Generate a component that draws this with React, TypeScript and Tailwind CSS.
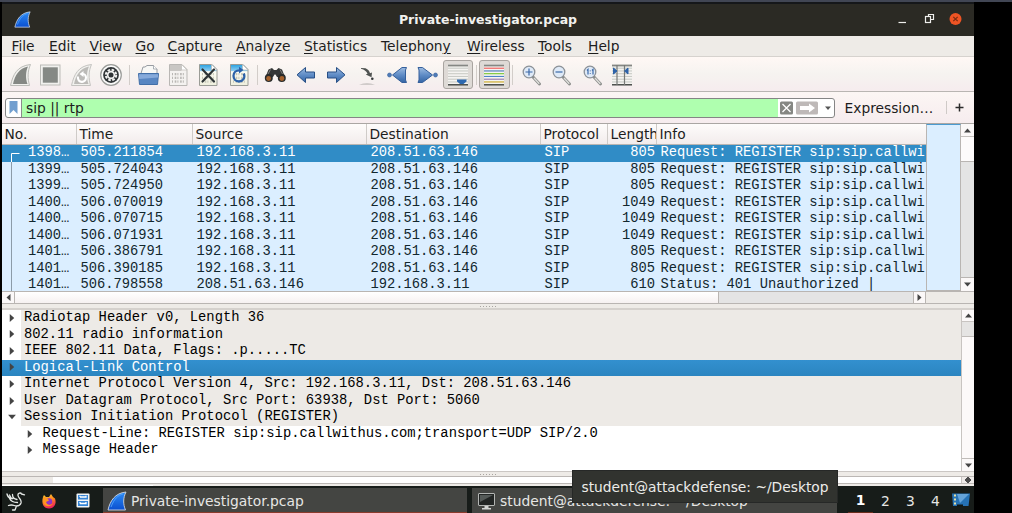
import React from "react";

type Kids = { children?: React.ReactNode };

const Icon = ({ children }: Kids) => (
  <div className="flex h-[30px] w-[30.42px] shrink-0 items-center justify-center">
    <svg width="30" height="30" viewBox="0 0 30 30" fill="none">{children}</svg>
  </div>
);

const Pressed = ({ children }: Kids) => (
  <div className="flex h-[29px] w-[30.42px] shrink-0 items-center justify-center rounded-[3px] border border-[#a9a4a0] bg-[#dedad6]">
    <svg width="28" height="28" viewBox="1 1 28 28" fill="none" className="shrink-0">{children}</svg>
  </div>
);

const Sep = () => (
  <div className="flex h-[20px] w-[6.2px] shrink-0 justify-center">
    <div className="w-px bg-[#d2cdc9]" />
  </div>
);

const Defs = () => (
  <svg width="0" height="0" className="absolute">
    <defs>
      <linearGradient id="arrow" x1="0" y1="0" x2="0" y2="1">
        <stop offset="0" stopColor="#9dbbe0" />
        <stop offset="0.5" stopColor="#5f8cc6" />
        <stop offset="1" stopColor="#3465a4" />
      </linearGradient>
      <linearGradient id="fin" x1="0" y1="0" x2="0" y2="1">
        <stop offset="0" stopColor="#2d8cf5" />
        <stop offset="1" stopColor="#0a4fd0" />
      </linearGradient>
      <linearGradient id="sheet" x1="0" y1="0" x2="0" y2="1">
        <stop offset="0" stopColor="#26a0e0" />
        <stop offset="0.3" stopColor="#8fcdf0" />
        <stop offset="0.34" stopColor="#fdfdf4" />
        <stop offset="1" stopColor="#eeeedd" />
      </linearGradient>
      <linearGradient id="fire" x1="0" y1="0" x2="0.3" y2="1">
        <stop offset="0" stopColor="#ffd83a" />
        <stop offset="0.5" stopColor="#ff8a1e" />
        <stop offset="1" stopColor="#f0245a" />
      </linearGradient>
    </defs>
  </svg>
);

const Fin = ({ size }: { size: number }) => (
  <svg width={size} height={size} viewBox="0 0 20 20" className="shrink-0">
    <path d="M1 19C3 10 8 2 19 1C16 7 16 13 18.500 19Z" fill="url(#fin)" stroke="#d2d8df" strokeWidth="0.9" />
    <path d="M4 16C7 8 11 4 16 3" stroke="#58aaff" strokeWidth="0.8" fill="none" />
  </svg>
);

const Bits = ({ color }: { color: string }) => (
  <g fill={color}>
    {[13, 16.7, 20.4].map((y) =>
      [9, 11.7, 14.4, 17.1, 19.8].map((x, i) => (
        <rect key={`${x}-${y}`} x={x} y={y} width={i % 2 ? 1.6 : 1} height="2.3" />
      ))
    )}
  </g>
);

const Sheet = ({ active }: { active?: boolean }) => (
  <>
    <path
      d="M6.500 4.500H19L24 9.500V25.500H6.500Z"
      fill={active ? "url(#sheet)" : "#f4f2f0"}
      stroke={active ? "#9a9c96" : "#b9b7b4"}
    />
    {!active && <path d="M7 5H18.500V11H7Z" fill="#c9c7c4" />}
    <path d="M18.500 4.500V10H24Z" fill="#fff" stroke="#bbb9b4" strokeWidth="0.7" />
    <Bits color={active ? "#c4c5b6" : "#b9b7b4"} />
  </>
);

const Lens = ({ children }: Kids) => (
  <>
    <path d="M17 17L23.500 24" stroke="#8c8e8c" strokeWidth="3" strokeLinecap="round" />
    <path d="M18 18L23.300 23.700" stroke="#e0e0dd" strokeWidth="1.300" />
    <circle cx="13" cy="12" r="5.800" fill="#dfeaf7" stroke="#8c9298" strokeWidth="1.300" />
    <g stroke="#3a68a8" strokeWidth="1.200">{children}</g>
  </>
);

const Lines = ({ colors }: { colors: string[] }) => (
  <g>
    <rect x="5" y="4.500" width="20" height="20.500" fill="#f5f4f1" />
    <path d="M5 5.500H25" stroke="#858783" strokeWidth="1.800" />
    {colors.map((c, i) => (
      <path key={i} d="M5 0H25" transform={`translate(0 ${8.2 + i * 2.75})`} stroke={c} strokeWidth="1.100" />
    ))}
    <path d="M5 24.800H25" stroke="#303432" strokeWidth="1.300" />
  </g>
);

const gray = ["#c9cbc6", "#c9cbc6", "#c9cbc6", "#c9cbc6", "#c9cbc6", "#c9cbc6"];

const Toolbar = () => (
  <div className="flex h-[36px] shrink-0 items-center border-t border-b border-t-[#d6d2ce] border-b-[#b9b5b2] bg-linear-to-b from-[#fff8f5] via-[#f6f3f0] to-[#f6ecee] pt-[1.5px] pl-[2.6px]">
    <Icon>
      <path d="M5.500 25.500C8 14.500 12 6 25.500 4.500C22.500 11 22.500 18.500 24.500 25.500Z" fill="#f1f1ee" stroke="#bcbcb8" />
      <path d="M8 24C10 15 14 8.500 23 6.500C20.500 12 20.500 18.500 22.500 24Z" fill="#858884" />
    </Icon>
    <Icon>
      <rect x="5.500" y="5" width="19.500" height="20" fill="#f1f1ee" stroke="#bcbcb8" />
      <rect x="7.800" y="7.300" width="15" height="15.400" fill="#858985" />
    </Icon>
    <Icon>
      <path d="M5.500 25.500C8 14.500 12 6 25.500 4.500C22.500 11 22.500 18.500 24.500 25.500Z" fill="#f1f1ee" stroke="#c4c3c0" />
      <path d="M8 24C10 15 14 8.500 23 6.500C20.500 12 20.500 18.500 22.500 24Z" fill="#bcbbb8" />
      <path d="M11.800 16.500C11.800 23.500 20 23.500 20 17.500C20 15.500 18.500 14 16.500 14" stroke="#fff" strokeWidth="2.100" />
      <path d="M17.500 11V17L13.500 14Z" fill="#fff" />
    </Icon>
    <Icon>
      <circle cx="15" cy="15" r="10.300" fill="#fbfbfa" stroke="#9a9c99" strokeWidth="1.200" />
      <circle cx="15" cy="15" r="7.900" fill="#2f3436" />
      <circle cx="15" cy="15" r="5.200" stroke="#f1f1f0" strokeWidth="2" strokeDasharray="2.600 1.480" />
      <circle cx="15" cy="15" r="4.200" fill="#f1f1f0" />
      <circle cx="15" cy="15" r="2.500" fill="#2f3436" />
    </Icon>
    <Sep />
    <Icon>
      <path d="M7.500 15L10 7H12L14 5.500H20.500L24 9V15Z" fill="#f8f8f6" stroke="#8c9299" strokeWidth="0.900" />
      <path d="M20.500 5.500V9H24" fill="#fff" stroke="#8c9299" strokeWidth="0.700" />
      <path d="M5.500 13.500H25.500L24.500 24.500H6.500Z" fill="#5886c2" stroke="#426fa8" />
      <path d="M6 14.300H25V17.500L6.300 19Z" fill="#86aadb" />
    </Icon>
    <Icon><Sheet /></Icon>
    <Icon>
      <Sheet active />
      <path d="M9.500 9.500L21 21.500M21 9.500L9.500 21.500" stroke="#2e3436" strokeWidth="2.200" strokeLinecap="round" />
    </Icon>
    <Icon>
      <Sheet active />
      <path d="M19.800 13.500C21.500 18 18.800 21.500 15 21.500C11.400 21.500 9.500 18.800 9.500 15.800C9.500 12.500 12 10.300 15.500 10.300" stroke="#2d62a8" strokeWidth="2.300" />
      <path d="M15 6.800V13.500L19.500 10Z" fill="#2d62a8" />
    </Icon>
    <Sep />
    <Icon>
      <path d="M8.500 9.500L12 8L14 10H16.500L18.500 8L22 9.500L25 17H17L15.500 14.500H14.500L13 17H5.500Z" fill="#343636" />
      <circle cx="8.800" cy="18" r="4" fill="#282b2b" />
      <circle cx="21.800" cy="18" r="4" fill="#282b2b" />
      <circle cx="8.600" cy="18.500" r="2.400" fill="#a6622c" />
      <circle cx="21.900" cy="18.500" r="2.400" fill="#a6622c" />
      <path d="M10.500 9.500L8 14M20 9.500L22.500 14" stroke="#888" strokeWidth="0.900" />
    </Icon>
    <Icon>
      <path d="M6 14.800L14.500 7.500V12H23.500V18H14.500V22.500Z" fill="url(#arrow)" stroke="#274f85" strokeLinejoin="round" />
    </Icon>
    <Icon>
      <path d="M24 14.800L15.500 7.500V12H6.500V18H15.500V22.500Z" fill="url(#arrow)" stroke="#274f85" strokeLinejoin="round" />
    </Icon>
    <Icon>
      <path d="M9 8L13.500 8.200C16 9.200 17.500 11 18 13.200L20 12.500L19.500 17.200L13.800 14.500L15.500 13.800C14.500 11.500 12.500 9.500 9 8.800Z" fill="#4f5351" />
      <circle cx="20.300" cy="18.800" r="1.300" fill="#33383a" />
      <path d="M7 24.500C12 23.200 18 23.200 23 24.500Z" fill="#aaa8a5" />
    </Icon>
    <Icon>
      <circle cx="7.500" cy="15" r="2" fill="#4f7cb8" stroke="#345f9b" strokeWidth="0.600" />
      <path d="M10.500 15L20 7.500H24.500L23.500 10V20L24.500 22.500H20Z" fill="url(#arrow)" stroke="#345f9b" strokeLinejoin="round" />
    </Icon>
    <Icon>
      <circle cx="23.500" cy="15" r="2" fill="#4f7cb8" stroke="#345f9b" strokeWidth="0.600" />
      <path d="M20.500 15L10.500 7.500H6L7 10V20L6 22.500H10.500Z" fill="url(#arrow)" stroke="#345f9b" strokeLinejoin="round" />
    </Icon>
    <Pressed>
      <Lines colors={gray} />
      <path d="M14 19.500H23.500V21.500L20.500 24H17L14 21.500Z" fill="#2d69b0" />
    </Pressed>
    <Sep />
    <Pressed>
      <Lines colors={["#ef5350", "#4777b8", "#73c52a", "#4e83c8", "#9274ab", "#c9a51b"]} />
    </Pressed>
    <Sep />
    <Icon><Lens><path d="M9.500 12H16.500M13 8.500V15.500" /></Lens></Icon>
    <Icon><Lens><path d="M9.500 12H16.500" /></Lens></Icon>
    <Icon><Lens><path d="M10 10.500L11 9.500V14.500M15 10.500L16 9.500V14.500M13.300 10.500V11.300M13.300 13.200V14" /></Lens></Icon>
    <Icon>
      <Lines colors={gray} />
      <path d="M10 5V25M17.500 5V25" stroke="#777a77" strokeWidth="1.200" />
      <path d="M6.500 8L10 11L6.500 14ZM21 8L17.500 11L21 14Z" fill="#2d62a8" stroke="#2d62a8" />
    </Icon>
  </div>
);

const menus: [string, string, string, string][] = [
  ["", "F", "ile", "w-[37.5px]"],
  ["", "E", "dit", "w-[40.5px]"],
  ["", "V", "iew", "w-[46px]"],
  ["", "G", "o", "w-[32px]"],
  ["", "C", "apture", "w-[68.5px]"],
  ["", "A", "nalyze", "w-[68px]"],
  ["", "S", "tatistics", "w-[77px]"],
  ["Telephon", "y", "", "w-[86px]"],
  ["", "W", "ireless", "w-[71px]"],
  ["", "T", "ools", "w-[50px]"],
  ["", "H", "elp", "w-[40px]"],
];

const REG = "Request: REGISTER sip:sip.callwi";
const A = "192.168.3.11";
const B = "208.51.63.146";
const packets = [
  ["1398…", "505.211854", A, B, "805", REG],
  ["1399…", "505.724043", A, B, "805", REG],
  ["1399…", "505.724950", A, B, "805", REG],
  ["1400…", "506.070019", A, B, "1049", REG],
  ["1400…", "506.070715", A, B, "1049", REG],
  ["1400…", "506.071931", A, B, "1049", REG],
  ["1401…", "506.386791", A, B, "805", REG],
  ["1401…", "506.390185", A, B, "805", REG],
  ["1401…", "506.798558", B, A, "610", "Status: 401 Unauthorized |"],
];

const cols: [string, string][] = [
  ["No.", "w-[75px]"],
  ["Time", "w-[116px]"],
  ["Source", "w-[174px]"],
  ["Destination", "w-[174px]"],
  ["Protocol", "w-[67px]"],
  ["Length", "w-[49px]"],
];

const Tri = ({ dir, size = 9 }: { dir: "up" | "down" | "left" | "right"; size?: number }) => {
  const d = {
    up: "M1 6.500H8L4.500 2.500Z",
    down: "M1 2.500H8L4.500 6.500Z",
    left: "M6.500 1V8L2.500 4.500Z",
    right: "M2.500 1V8L6.500 4.500Z",
  }[dir];
  return (
    <svg width={size} height={size} viewBox="0 0 9 9" className="shrink-0"><path d={d} fill="#444" /></svg>
  );
};

const details: [string, "right" | "down", number, boolean][] = [
  ["Radiotap Header v0, Length 36", "right", 0, false],
  ["802.11 radio information", "right", 0, false],
  ["IEEE 802.11 Data, Flags: .p.....TC", "right", 0, false],
  ["Logical-Link Control", "right", 0, true],
  ["Internet Protocol Version 4, Src: 192.168.3.11, Dst: 208.51.63.146", "right", 0, false],
  ["User Datagram Protocol, Src Port: 63938, Dst Port: 5060", "right", 0, false],
  ["Session Initiation Protocol (REGISTER)", "down", 0, false],
  ["Request-Line: REGISTER sip:sip.callwithus.com;transport=UDP SIP/2.0", "right", 1, false],
  ["Message Header", "right", 1, false],
];

const Grip = () => (
  <div className="flex gap-[2px]">
    {[0, 1, 2, 3, 4, 5].map((i) => <div key={i} className="h-px w-px bg-[#a9a5a1]" />)}
  </div>
);

const PacketList = () => (
  <div className="flex h-[168px] shrink-0 border-t border-[#aaa6a3]">
    <div className="flex w-[924px] shrink-0 flex-col overflow-hidden">
      <div className="flex h-[21px] shrink-0 border-b border-[#b9b5b2] bg-linear-to-b from-[#fefcfb] to-[#f2ecec] leading-[20px]">
        {cols.map(([name, w]) => (
          <div key={name} className={`${w} shrink-0 overflow-hidden border-r border-[#cfcbc8] pl-[2.5px]`}>{name}</div>
        ))}
        <div className="pl-[2.5px]">Info</div>
      </div>
      <div className="flex h-[146px] flex-col overflow-hidden bg-[#dbeeff] font-['Liberation_Mono',monospace] text-[13.78px] leading-[16.55px] text-[#12272e]">
        {packets.map((p, i) => (
          <div key={i} className={`flex h-[16.55px] shrink-0 whitespace-pre ${i === 0 ? "bg-[#308cc6] text-white" : ""}`}>
            <div className="flex w-[75px] shrink-0">
              <svg width="26" height="17" viewBox="0 0 26 17" className="shrink-0" fill="none">
                <path d={i === 0 ? "M17.500 8.500H9.500V17" : "M9.500 0V17"} stroke={i === 0 ? "#fff" : "#8c9ba8"} />
              </svg>
              <span>{p[0]}</span>
            </div>
            <div className="w-[116px] shrink-0 pl-[3.5px]">{p[1]}</div>
            <div className="w-[174px] shrink-0 pl-[3.5px]">{p[2]}</div>
            <div className="w-[174px] shrink-0 pl-[3.5px]">{p[3]}</div>
            <div className="w-[67px] shrink-0 pl-[3.5px]">SIP</div>
            <div className="w-[49px] shrink-0 pr-[2px] text-right">{p[4]}</div>
            <div className="pl-[3.5px]">{p[5]}</div>
          </div>
        ))}
      </div>
    </div>
    <div className="h-[167px] w-[35px] shrink-0 border-t border-r border-b border-l border-[#b9b5b2] border-t-[#4b9bd0] bg-[#dbeeff]" />
    <div className="flex w-[13px] shrink-0 flex-col bg-[#e4e4e4]">
      <div className="flex h-[13px] items-center justify-center border-b border-[#c5c1be] bg-[#fbf8f8]"><Tri dir="up" /></div>
      <div className="h-[25px] border-b border-[#b9b5b2] bg-[#fdfbfb]" />
      <div className="grow" />
      <div className="flex h-[14px] items-center justify-center border-t border-[#b9b5b2] bg-[#fbf8f8]"><Tri dir="down" /></div>
    </div>
  </div>
);

const DetailTree = () => (
  <div className="flex h-[164px] shrink-0 border-t-2 border-b border-t-[#d5d1cd] border-b-[#cbc7c4] bg-white">
    <div className="flex w-[959px] shrink-0 flex-col font-['Liberation_Mono',monospace] text-[13.82px] leading-[15px]">
      {details.map(([text, dir, depth, selected], i) => (
        <div
          key={i}
          className={`flex h-[16.55px] shrink-0 items-center whitespace-pre ${selected ? "bg-linear-to-b from-[#3390cf] to-[#2b85c0] text-white" : "text-black"}`}
        >
          <div className={`flex shrink-0 items-center pb-px ${depth ? "w-[37.5px] pl-[23px]" : "w-[19px] pl-[4.5px]"}`}><Tri dir={dir} size={10} /></div>
          <div className={`h-full grow pl-[3px] ${!selected && !depth ? "bg-[#edeae6]" : ""}`}>{text}</div>
        </div>
      ))}
    </div>
    <div className="flex w-[13px] shrink-0 flex-col border-l border-[#c8c4c1] bg-[#fcf9f9]">
      <div className="flex h-[12px] items-center justify-center border-b border-[#c8c4c1]"><Tri dir="up" /></div>
      <div className="h-[15px] border-b border-[#c0bcb9] bg-[#e5e4e3]" />
      <div className="grow" />
      <div className="flex h-[13px] items-center justify-center border-t border-[#c0bcb9]"><Tri dir="down" /></div>
    </div>
  </div>
);

const Taskbar = () => (
  <div className="flex h-[27px] shrink-0 items-end bg-[#171c19] font-['DejaVu_Sans',sans-serif] text-[13.85px] text-[#e6e6e4]">
    <div className="flex h-[25px] w-[101px] shrink-0 items-center">
      <svg width="22" height="22" viewBox="0 0 22 22" className="ml-[3px] shrink-0" fill="none" stroke="#e4e7e5" strokeWidth="1.300" strokeLinecap="round" strokeLinejoin="round">
        <path d="M19.500 4.800L16.500 4C16 2.500 12.500 2.500 13 5.500C13.500 8.500 17 9.500 16 13C15.200 15.500 13 16 11.500 16L10 20H7.500M11.500 16C9 16 8 14 3.500 15.500M12.500 12.500C9 12.500 6 11.500 4.500 8.500H8M2 4C2.500 6.500 4 8 6 8.500M7.500 4.500C7.500 7 9 9 12 9.500M4.500 5L6.500 8.500" />
      </svg>
      <svg width="16" height="16" viewBox="0 0 16 16" className="ml-[14px] shrink-0">
        <path d="M2 4L3 2L5 4L8 4L10 1L12 4L14 5.500C16 11 13 15.500 8 15.500C3 15.500 0 11 2 4Z" fill="url(#fire)" />
        <circle cx="8" cy="8.500" r="3.200" fill="#8f35c4" />
        <path d="M2 4C4 4 7 5.500 8 7.500L5 9C6 12 9 13 12 10.500C10 14.500 4 14 2.500 10Z" fill="#ff9620" />
      </svg>
      <svg width="14" height="15" viewBox="0 0 14 15" className="ml-[19px] shrink-0">
        <rect x="0.500" y="0.500" width="13" height="14" rx="1" fill="#f0f3f5" />
        <path d="M2 2H12V6.500H2ZM2 8H12V13H2Z" fill="#3584d5" />
        <path d="M4 4H10V2.800M4 4V2.800M4 10.500H10V9M4 10.500V9" stroke="#fff" strokeWidth="1.300" fill="none" />
      </svg>
    </div>
    <div className="flex h-[25px] w-[364px] shrink-0 items-center border-b border-[#8c3b2c] bg-[#444542] pt-[2px] pl-[4px]">
      <Fin size={20} />
      <span className="pl-[4px]">Private-investigator.pcap</span>
    </div>
    <div className="ml-[5px] flex h-[25px] w-[365px] shrink-0 items-center bg-[#444542] pt-[1px] pl-[6px]">
      <svg width="17" height="17" viewBox="0 0 17 17" className="shrink-0">
        <rect x="0.500" y="0.500" width="16" height="12" rx="0.500" fill="#222524" stroke="#b3b5b3" />
        <path d="M2 2H15L2 9Z" fill="#555a58" />
        <path d="M6.500 13H10.500V15H13V16.500H4V15H6.500Z" fill="#d3d5d3" />
      </svg>
      <span className="pt-px pl-[5px]">student@attackdefense: ~/Desktop</span>
    </div>
    <div className="ml-[11px] flex h-[25px] grow items-center leading-[26px]">
      <div className="h-[25px] w-[25px] border-b border-[#6b2c1b] text-center leading-[25px] font-bold text-white">1</div>
      <div className="w-[25px] text-center">2</div>
      <div className="w-[25px] text-center">3</div>
      <div className="w-[25px] text-center">4</div>
      <svg width="18" height="15" viewBox="0 0 18 15" className="ml-[4px]">
        <path d="M0 0.500H18L16.500 13H1Z" fill="#2672b5" />
        <path d="M5 1H17L8 10Z" fill="#64a3d9" />
        <path d="M2 2.500H4M2 6.500H4M2 10.500H4" stroke="#e5e0a6" strokeWidth="2" />
        <path d="M5 11.500H11V13.500H5Z" fill="#101817" />
      </svg>
    </div>
  </div>
);

export default function App() {
  return (
    <div className="relative flex h-[513px] w-[1012px] flex-col overflow-hidden bg-black font-['DejaVu_Sans',sans-serif] text-[13.8px] text-[#1d1d1d]">
      <Defs />
      <div className="h-[2px] shrink-0 bg-[#414654]" />
      <div className="ml-[2px] flex h-[511px] w-[972px] flex-col overflow-hidden bg-[#eeebe7]">
        <div className="grid h-[34px] shrink-0 grid-cols-[1fr_auto_1fr] items-center border-t-2 border-t-[#15171a] bg-[#2b2a24]">
          <div className="-mt-[2px] pl-[12px]"><Fin size={17} /></div>
          <div className="text-[12.5px] font-bold text-[#f2f2ef]">Private-investigator.pcap</div>
          <div className="-mt-[2px] flex items-center justify-end pr-[12.5px]">
            <svg width="64" height="14" viewBox="0 0 64 14" fill="none">
              <path d="M0.500 10.500H8" stroke="#eeeeec" strokeWidth="1.200" />
              <path d="M30.500 5V2.500H35.500V7.500H33" stroke="#eeeeec" strokeWidth="1.200" />
              <rect x="27.500" y="4.500" width="5" height="6" stroke="#eeeeec" strokeWidth="1.200" />
              <circle cx="57.500" cy="7" r="6" fill="#ee5424" />
              <path d="M55.300 4.800L59.700 9.200M59.700 4.800L55.300 9.200" stroke="#7a2c12" strokeWidth="1.200" />
            </svg>
          </div>
        </div>
        <div className="flex h-[20px] shrink-0 pl-[9.5px] leading-[20px]">
          {menus.map(([pre, key, post, w]) => (
            <div key={pre + key + post} className={`${w} shrink-0 whitespace-nowrap`}>
              {pre}<span className="underline decoration-1 underline-offset-2">{key}</span>{post}
            </div>
          ))}
        </div>
        <Toolbar />
        <div className="flex h-[31px] shrink-0 items-center bg-linear-to-b from-[#fcf6f4] to-[#f6ecee] pl-[3px]">
          <div className="flex h-[20px] w-[830px] shrink-0 items-center overflow-hidden rounded-[3px] border border-[#858585] bg-white">
            <div className="flex h-full w-[16px] shrink-0 items-center justify-center border-r border-[#8b8b8b]">
              <svg width="9" height="13" viewBox="0 0 9 13"><path d="M0.500 0H8.500V13L4.500 9L0.500 13Z" fill="#729fcf" /></svg>
            </div>
            <div className="h-full w-[756px] shrink-0 bg-[#afffaf] pl-[4px] leading-[18px]">sip || rtp</div>
            <svg width="56" height="14" viewBox="0 0 56 14" className="shrink-0" fill="none">
              <rect x="2" y="0.500" width="13" height="13" rx="1.500" fill="#858783" />
              <path d="M4.500 3L12.500 11M12.500 3L4.500 11" stroke="#fff" strokeWidth="1.300" />
              <rect x="18" y="0.500" width="22" height="13" rx="1.500" fill="#beb9b8" />
              <path d="M22 5H31V2.500L37 7L31 11.500V9H22Z" fill="#fff" />
              <path d="M47 5.500H53L50 9Z" fill="#555" />
            </svg>
          </div>
          <div className="w-[111px] pt-px pl-[9.5px]">Expression…</div>
          <div className="h-[13px] w-px bg-[#cfcac7]" />
          <svg width="9" height="9" viewBox="0 0 9 9" className="ml-[8px]"><path d="M0.500 4.500H8.500M4.500 0.500V8.500" stroke="#2b2b2b" strokeWidth="1.500" /></svg>
        </div>
        <PacketList />
        <div className="flex h-[13px] shrink-0 border-t border-b border-[#b9b5b2]">
          <div className="flex w-[13px] items-center justify-center border-r border-[#b9b5b2] bg-[#fbf8f8]"><Tri dir="left" /></div>
          <div className="w-[704px] border-r border-[#b9b5b2] bg-linear-to-b from-white to-[#f6f1f1]" />
          <div className="w-[194px] bg-[#e4e4e4]" />
          <div className="flex w-[13px] items-center justify-center border-r border-l border-[#b9b5b2] bg-[#fbf8f8]"><Tri dir="right" /></div>
        </div>
        <div className="flex h-[4px] shrink-0 items-center justify-center"><Grip /></div>
        <DetailTree />
        <div className="flex h-[4px] shrink-0 items-center justify-center"><Grip /></div>
        <div className="flex h-[8px] shrink-0 border-t border-b border-[#bbb7b4] bg-white">
          <div className="w-[51px] bg-[#edeae6]" />
          <div className="grow" />
          <div className="flex w-[13px] items-center justify-center border-l border-[#c8c4c1] bg-[#eeeae8]">
            <svg width="8" height="6" viewBox="0 0 8 6"><path d="M1 3L4 0L7 3L4 6Z" fill="#4b4b4b" stroke="#4b4b4b" /></svg>
          </div>
        </div>
        <div className="flex h-[2px] shrink-0 flex-col justify-end"><div className="h-px w-[151px] bg-white" /></div>
        <Taskbar />
      </div>
      <div className="absolute top-[470px] left-[572px] h-[33px] w-[266px] border border-[#262827] bg-[#31332f] pl-[8.5px] leading-[32px] whitespace-nowrap text-[#ecece9]">
        student@attackdefense: ~/Desktop
      </div>
    </div>
  );
}
